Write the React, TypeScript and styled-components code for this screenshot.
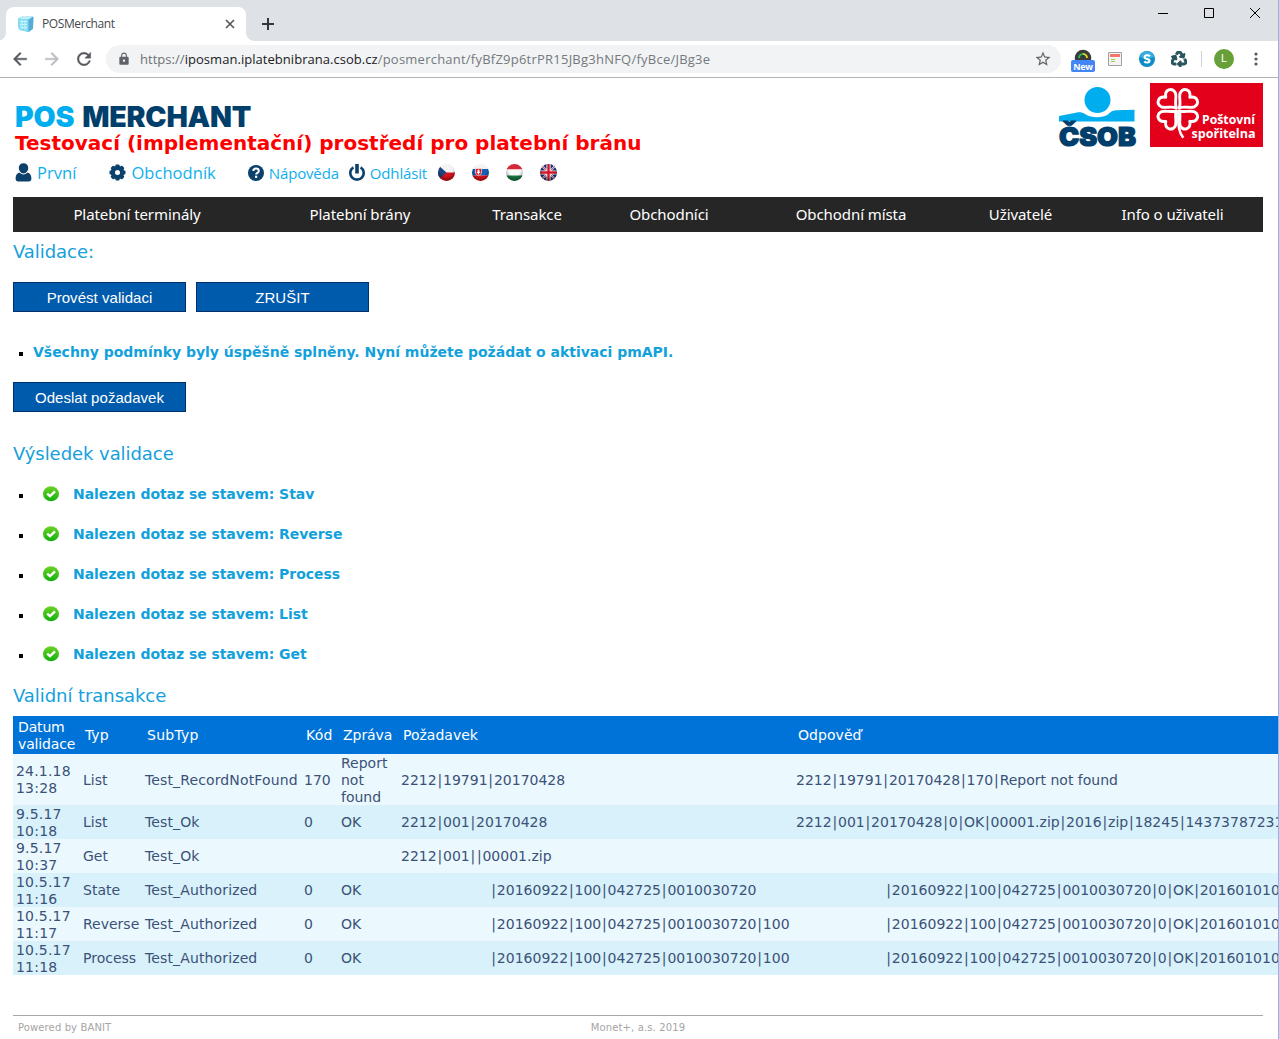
import React from "react";
import styled, { createGlobalStyle } from "styled-components";
import { FaRecycle } from "react-icons/fa";
import { MdLock, MdRefresh, MdArrowBack, MdArrowForward, MdStarBorder } from "react-icons/md";

const VERDANA = 'Verdana, "DejaVu Sans", sans-serif';
const UI = '"Segoe UI", "Open Sans", sans-serif';

const GlobalStyle = createGlobalStyle`
  *, *::before, *::after { box-sizing: border-box; }
  html, body { margin: 0; padding: 0; background: #fff; overflow: hidden; }
`;

const Window = styled.div`
  width: 1279px;
  height: 1039px;
  overflow: hidden;
  display: flex;
  flex-direction: column;
  background: #fff;
  border-right: 1px solid #80b8fc;
  font-family: ${VERDANA};
`;

/* ---------- browser chrome ---------- */

const TabStrip = styled.div`
  display: flex;
  flex: none;
  height: 41px;
  background: #dee1e6;
  padding: 7px 17px 0 6px;
`;

const Tab = styled.div`
  position: relative;
  display: flex;
  align-items: center;
  width: 240px;
  height: 34px;
  padding: 0 10px 0 11px;
  background: #fff;
  border-radius: 8px 8px 0 0;

  &::before,
  &::after {
    content: "";
    position: absolute;
    bottom: 0;
    width: 8px;
    height: 8px;
  }
  &::before {
    left: -8px;
    background: radial-gradient(circle at 0 0, transparent 7.5px, #fff 8px);
  }
  &::after {
    right: -8px;
    background: radial-gradient(circle at 100% 0, transparent 7.5px, #fff 8px);
  }
`;

const TabTitle = styled.span`
  flex: 1;
  margin-left: 7px;
  font: 12px/16px ${UI};
  letter-spacing: -0.4px;
  color: #45494d;
`;

const NewTab = styled.div`
  display: flex;
  align-items: center;
  margin-left: 15px;
  height: 34px;
`;

const WindowButtons = styled.div`
  display: flex;
  gap: 34px;
  margin-left: auto;
  height: 12px;
`;

const Toolbar = styled.div`
  display: flex;
  flex: none;
  align-items: center;
  height: 37px;
  padding: 0 13px 0 10px;
  border-bottom: 1px solid #b1b2b4;
`;

const NavButtons = styled.div`
  display: flex;
  gap: 12px;
  width: 96px;

  path:not([fill="none"]) { stroke: currentColor; stroke-width: 0.5px; }
`;

const Omnibox = styled.div`
  display: flex;
  align-items: center;
  width: 955px;
  height: 28px;
  padding: 0 9px 0 11px;
  border-radius: 14px;
  background: #f1f3f4;
`;

const Url = styled.span`
  flex: 1;
  margin-left: 9px;
  font: 13px/20px ${UI};
  letter-spacing: 0.23px;
  color: #75797e;
`;

const Host = styled.span<{ $dim?: boolean }>`
  color: ${(p) => (p.$dim ? "#6d7175" : "#202124")};
  letter-spacing: 0.04px;
`;

const Extensions = styled.div`
  display: flex;
  align-items: center;
  flex: 1;
  padding-left: 10px;
`;

const Gauge = styled.div`
  position: relative;
  width: 24px;
  height: 24px;
  margin-right: 12px;
`;

const NewBadge = styled.span`
  position: absolute;
  left: 0;
  bottom: -1px;
  width: 24px;
  height: 12px;
  border-radius: 2px;
  background: #4285f4;
  color: #fff;
  font: bold 9px/13px ${UI};
  letter-spacing: -0.2px;
  text-align: center;
`;

const Slot = styled.div`
  display: flex;
  justify-content: center;
  width: 16px;
  margin-right: 16px;
`;

const RecycleIcon = styled(FaRecycle)`
  color: #28555c;
  stroke: currentColor;
  stroke-width: 34px;
`;

const Separator = styled.div`
  width: 1px;
  height: 16px;
  margin: 0 12px 0 -2px;
  background: #cfd1d4;
`;

const Avatar = styled.div`
  width: 20px;
  height: 20px;
  margin-right: 20px;
  border-radius: 50%;
  background: #689f38;
  color: #fff;
  font: 11px/20px Roboto, sans-serif;
  text-align: center;
`;

/* ---------- page header ---------- */

const Page = styled.div`
  display: flex;
  flex-direction: column;
  flex: 1;
  padding: 0 15px 0 13px;
`;

const Header = styled.header`
  display: flex;
  justify-content: space-between;
  height: 119px;
`;

const Brand = styled.div`
  padding: 23px 0 0 2px;
`;

const Logotype = styled.h1`
  display: flex;
  gap: 8px;
  margin: 0;
  height: 30px;
  font: 900 28.5px/31px Inter, sans-serif;
  letter-spacing: -0.2px;
  color: #003e6b;
`;

const LogoAccent = styled.span`
  color: #00aeef;
`;

const Environment = styled.p`
  margin: 0;
  height: 24px;
  font: bold 20px/24px ${VERDANA};
  color: #f00;
`;

const UserBar = styled.div`
  display: flex;
  align-items: center;
  height: 36px;
`;

const UserLink = styled.a<{ $large?: boolean; $after: number }>`
  display: flex;
  align-items: center;
  gap: 5px;
  margin-right: ${(p) => p.$after}px;
  font: ${(p) => (p.$large ? 16.5 : 15)}px/20px ${UI};
  letter-spacing: ${(p) => (p.$large ? 0.05 : -0.16)}px;
  color: #10afec;

  svg { margin-top: -1px; }
`;

const Flags = styled.div`
  display: flex;
  gap: 17px;
  margin-top: -2px;
`;

const Logos = styled.div`
  display: flex;
  gap: 14px;
  padding-top: 5px;
`;

const BankLogo = styled.div`
  width: 77px;
  height: 64px;

  svg { overflow: visible; }
`;

const SavingsLogo = styled.div`
  display: flex;
  width: 113px;
  height: 64px;
  background: #e2001a;
`;

/* ---------- navigation ---------- */

const MainNav = styled.nav`
  display: grid;
  grid-template-columns: 248px 198px 136px 148px 216px 123px 181px;
  flex: none;
  height: 35px;
  background: #262626;
`;

const NavItem = styled.a`
  font: 15px/35px "Noto Sans", sans-serif;
  letter-spacing: -0.08px;
  text-align: center;
  color: #fff;
`;

/* ---------- content ---------- */

const Heading = styled.h2<{ $h: number; $gap?: number }>`
  margin: ${(p) => p.$gap ?? 0}px 0 0;
  height: ${(p) => p.$h}px;
  font: 18px/${(p) => p.$h}px ${VERDANA};
  letter-spacing: -0.06px;
  color: #159fdb;
`;

const Actions = styled.div`
  display: flex;
  gap: 10px;
  padding-top: 10px;
`;

const Button = styled.button`
  width: 173px;
  height: 30px;
  padding: 2px 0 0;
  border: 1px solid #00306b;
  background: #005bac;
  color: #fff;
  font: 15px/26px Arial, "Liberation Sans", sans-serif;
  letter-spacing: 0.04px;
`;

const List = styled.ul`
  margin: 0;
  padding: 0;
  list-style: none;
`;

const Item = styled.li`
  display: flex;
  align-items: center;
  height: 40px;
  padding-left: 6px;
  font: bold 14px/17px ${VERDANA};
  letter-spacing: -0.06px;
  color: #13a1dc;

  &::before {
    content: "";
    width: 4px;
    height: 4px;
    margin: 3px 10px 0 0;
    background: #000;
  }
`;

const Notice = styled(List)`
  padding: 20px 0 0;

  ${Item} { letter-spacing: -0.02px; }
`;

const Check = styled.svg`
  width: 16px;
  height: 16px;
  margin: 0 14px 0 10px;
`;

/* ---------- transactions table ---------- */

const Table = styled.div`
  flex: none;
  width: 1265px;
  overflow: hidden;
`;

const Row = styled.div<{ $bg: string; $h: number; $head?: boolean }>`
  display: grid;
  grid-template-columns: 67px 62px 159px 37px 60px 395px 485px;
  grid-template-rows: 100%;
  align-items: center;
  height: ${(p) => p.$h}px;
  padding-top: 1px;
  background: ${(p) => p.$bg};
  color: ${(p) => (p.$head ? "#fff" : "#3b5178")};
  font: 14px/17px ${VERDANA};

  > div { padding-left: ${(p) => (p.$head ? 5 : 3)}px; }
`;

const Cell = styled.div<{ $ls?: number; $indent?: boolean; $wrap?: boolean }>`
  white-space: ${(p) => (p.$wrap ? "normal" : "nowrap")};
  letter-spacing: ${(p) => p.$ls ?? 0}px;
  text-indent: ${(p) => (p.$indent ? 89.5 : 0)}px;
`;

const Bar = styled.span`
  display: inline-block;
  width: 6.36px;
  text-indent: 0;
  text-align: center;
`;

const Footer = styled.footer`
  display: grid;
  grid-template-columns: 1fr auto 1fr;
  height: 24px;
  margin-top: 40px;
  padding: 0 5px;
  border-top: 1px solid #a8a8a8;
  font: 10px/24px ${VERDANA};
  letter-spacing: 0.12px;
  color: #a5a5a5;
`;

const nav = [
  "Platební terminály", "Platební brány", "Transakce", "Obchodníci",
  "Obchodní místa", "Uživatelé", "Info o uživateli",
];

const states = ["Stav", "Reverse", "Process", "List", "Get"];

type Tx = { date: string; type: string; sub: string; code: string; msg: string; req: string; res: string };

const rows: Tx[] = [
  { date: "24.1.18 13:28", type: "List", sub: "Test_RecordNotFound", code: "170", msg: "Report not found", req: "2212|19791|20170428", res: "2212|19791|20170428|170|Report not found" },
  { date: "9.5.17 10:18", type: "List", sub: "Test_Ok", code: "0", msg: "OK", req: "2212|001|20170428", res: "2212|001|20170428|0|OK|00001.zip|2016|zip|18245|14373787231" },
  { date: "9.5.17 10:37", type: "Get", sub: "Test_Ok", code: "", msg: "", req: "2212|001||00001.zip", res: "" },
  { date: "10.5.17 11:16", type: "State", sub: "Test_Authorized", code: "0", msg: "OK", req: "|20160922|100|042725|0010030720", res: "|20160922|100|042725|0010030720|0|OK|201601010" },
  { date: "10.5.17 11:17", type: "Reverse", sub: "Test_Authorized", code: "0", msg: "OK", req: "|20160922|100|042725|0010030720|100", res: "|20160922|100|042725|0010030720|0|OK|201601010" },
  { date: "10.5.17 11:18", type: "Process", sub: "Test_Authorized", code: "0", msg: "OK", req: "|20160922|100|042725|0010030720|100", res: "|20160922|100|042725|0010030720|0|OK|201601010" },
];

/* Pipe-separated message whose separators keep a fixed advance. */
function Message({ text }: { text: string }) {
  return (
    <Cell $indent={text.startsWith("|")}>
      {text.split("|").map((part, i) => (
        <React.Fragment key={i}>
          {i > 0 && <Bar>|</Bar>}
          {part}
        </React.Fragment>
      ))}
    </Cell>
  );
}

const Cube = () => (
  <svg width="18" height="18" viewBox="0 0 18 18">
    <path d="M1 3.500 6 1l10 .6.8 1.200-.8 11L11.500 17 3 15 1.400 13z" fill="#6fcbea" />
    <path d="M1 3.500 6 1l10 .6-4.500 3z" fill="#c3eef8" />
    <path d="M1 3.500l10.500 1V17L3 15l-1.600-2z" fill="#86dcf2" />
    <path d="M11.500 4.600 16 2v11.800L11.500 17z" fill="#57abd4" />
    <path d="M3 6.500h7M3 9.500h7M3.500 12.500h6.500M5 5v9M8 5v10" stroke="#c4f4fc" strokeWidth="1" fill="none" />
  </svg>
);

const NAVY = "#0b416b";

const Person = () => (
  <svg width="17" height="19" viewBox="0 0 17 19" fill={NAVY}>
    <path d="M8.500 0.300c2.900 0 4.700 1.800 4.700 4.500s-1.700 5.700-4.700 5.700-4.700-3-4.700-5.700S5.600.300 8.500.300z" />
    <path d="M4.400 9.600C2 10.500.600 12.200.600 15.500c0 1.800 1 3 2.600 3h10.600c1.600 0 2.600-1.200 2.600-3 0-3.300-1.400-5-3.800-5.900-1.100 1.200-2.400 1.800-4.100 1.800s-3-.6-4.100-1.800z" />
  </svg>
);

const Gear = () => (
  <svg width="17" height="17" viewBox="-8.500 -8.500 17 17" fill={NAVY}>
    {[0, 45, 90, 135].map((a) => (
      <rect key={a} x="-2.100" y="-8" width="4.200" height="16" rx="1" transform={`rotate(${a})`} />
    ))}
    <circle r="4.800" fill="none" stroke={NAVY} strokeWidth="4" />
    <circle r="2.500" fill="#fff" />
  </svg>
);

const Help = () => (
  <svg width="16" height="16" viewBox="0 0 16 16">
    <circle cx="8" cy="8" r="8" fill={NAVY} />
    <path d="M5.300 6.100C5.300 4.400 6.400 3.500 8 3.500s2.800.9 2.800 2.400c0 1.900-2.700 1.900-2.700 3.700" fill="none" stroke="#fff" strokeWidth="2" />
    <rect x="7" y="10.700" width="2.200" height="2.200" fill="#fff" />
  </svg>
);

const Power = () => (
  <svg width="16" height="18" viewBox="0 0 16 18" fill="none" stroke={NAVY}>
    <path d="M4.400 3.300a6.700 6.700 0 1 0 7.200 0" strokeWidth="2.600" />
    <path d="M8 0v9.500" strokeWidth="3.600" />
  </svg>
);

type Country = "cz" | "sk" | "hu" | "gb";

function Flag({ code }: { code: Country }) {
  return (
    <svg width="17" height="17" viewBox="0 0 17 17">
      <defs>
        <clipPath id={`clip-${code}`}><circle cx="8.500" cy="8.500" r="8.500" /></clipPath>
        <radialGradient id={`shade-${code}`} cx=".5" cy=".35" r=".7">
          <stop offset=".5" stopColor="#000" stopOpacity="0" />
          <stop offset="1" stopColor="#000" stopOpacity=".5" />
        </radialGradient>
      </defs>
      <g clipPath={`url(#clip-${code})`}>
        {code === "cz" && (
          <>
            <path d="M0 0h17v8.500H0z" fill="#f4f4f4" />
            <path d="M0 8.500h17V17H0z" fill="#d8121c" />
            <path d="M0 1l8.500 7.500L0 16z" fill="#1c4680" />
          </>
        )}
        {code === "sk" && (
          <>
            <path d="M0 0h17v5.500H0z" fill="#f4f4f4" />
            <path d="M0 5h17v6.500H0z" fill="#1660b4" />
            <path d="M0 11.500h17V17H0z" fill="#e0141c" />
            <path d="M3.500 4.500h6v4.500c0 1.300-1.200 2-3 2.700-1.800-.7-3-1.400-3-2.700z" fill="#e0141c" stroke="#fff" strokeWidth=".6" />
            <path d="M6.500 5.500v5M5 7h3M4.700 8.600h3.600" stroke="#fff" strokeWidth="1" />
          </>
        )}
        {code === "hu" && (
          <>
            <path d="M0 0h17v5.500H0z" fill="#d42a38" />
            <path d="M0 5.500h17v6H0z" fill="#f8f8f8" />
            <path d="M0 11.500h17V17H0z" fill="#1b7a45" />
          </>
        )}
        {code === "gb" && (
          <>
            <path d="M0 0h17v17H0z" fill="#17306f" />
            <path d="M1 1l15 15M16 1L1 16" stroke="#d0d4e4" strokeWidth="2" />
            <path d="M1 1l15 15M16 1L1 16" stroke="#c8304a" strokeWidth=".8" />
            <path d="M8.500 0v17M0 8.500h17" stroke="#f4f4f4" strokeWidth="4.200" />
            <path d="M8.500 0v17M0 8.500h17" stroke="#d4152a" strokeWidth="2.400" />
          </>
        )}
        <circle cx="8.500" cy="8.500" r="8.500" fill={`url(#shade-${code})`} />
      </g>
    </svg>
  );
}

const CsobLogo = () => (
  <BankLogo>
    <svg width="77" height="64" viewBox="0 0 77 64">
      <path d="M0 33 18 29.500c3-.5 5.500 0 8 1.500 6 4 17 4.500 23 .5C52 29 53 27.500 57 27.300L75.500 26.800v11.700H0z" fill="#00aeef" />
      <circle cx="38.500" cy="17" r="13" fill="#00aeef" />
      <text x="0" y="63.200" textLength="77" lengthAdjust="spacingAndGlyphs" fontFamily="Inter, sans-serif" fontWeight="900" fontSize="26" stroke="#003e6b" strokeWidth="1.200" fill="#003e6b">ČSOB</text>
    </svg>
  </BankLogo>
);

const PostLogo = () => (
  <SavingsLogo>
    <svg width="113" height="64" viewBox="0 0 113 64">
      <g transform="translate(27.800 26.300)" fill="none" stroke="#fff" strokeWidth="2.900" strokeLinejoin="round">
        {[45, 135, 225, 315].map((a) => (
          <path key={a} transform={`rotate(${a})`} d="M0-2C-2-7-8.500-9.500-10-13.500-11.500-20-4.500-23.500 0-17 4.500-23.500 11.500-20 10-13.500 8.500-9.500 2-7 0-2z" />
        ))}
        <path d="M.500 2C.800 13-.500 21 5.500 28.500" strokeWidth="2.600" />
      </g>
      <g fontFamily="Open Sans, sans-serif" fontWeight="700" fontSize="13" fill="#fff">
        <text x="52" y="41" textLength="53" lengthAdjust="spacingAndGlyphs">Poštovní</text>
        <text x="41.500" y="55" textLength="64" lengthAdjust="spacingAndGlyphs">spořitelna</text>
      </g>
    </svg>
  </SavingsLogo>
);

const OkMark = () => (
  <Check viewBox="0 0 16 16">
    <defs>
      <linearGradient id="ok" x1="0" y1="0" x2="0" y2="1">
        <stop offset="0" stopColor="#6fd327" />
        <stop offset="1" stopColor="#12b00e" />
      </linearGradient>
    </defs>
    <ellipse cx="8" cy="7.700" rx="8" ry="7.500" fill="url(#ok)" />
    <path d="M4.200 7.600 7 10.200l5-4.800" fill="none" stroke="#fff" strokeWidth="2.400" />
  </Check>
);

export default function App() {
  return (
    <Window>
      <GlobalStyle />
      <TabStrip>
        <Tab>
          <Cube />
          <TabTitle>POSMerchant</TabTitle>
          <svg width="12" height="12" viewBox="0 0 12 12" stroke="#55595e" strokeWidth="1.700">
            <path d="M2 2l8 8M10 2l-8 8" />
          </svg>
        </Tab>
        <NewTab>
          <svg width="14" height="14" viewBox="0 0 14 14" stroke="#33373a" strokeWidth="2">
            <path d="M7 1v12M1 7h12" />
          </svg>
        </NewTab>
        <WindowButtons>
          <svg width="12" height="12" viewBox="0 0 12 12"><path d="M1 6.500h10" stroke="#000" /></svg>
          <svg width="12" height="12" viewBox="0 0 12 12"><path d="M1.500 1.500h9v9h-9z" fill="none" stroke="#000" /></svg>
          <svg width="12" height="12" viewBox="0 0 12 12"><path d="M1 1l10 10M11 1L1 11" stroke="#000" /></svg>
        </WindowButtons>
      </TabStrip>

      <Toolbar>
        <NavButtons>
          <MdArrowBack size={20} color="#55595e" />
          <MdArrowForward size={20} color="#bbbdc0" />
          <MdRefresh size={20} color="#55595e" />
        </NavButtons>
        <Omnibox>
          <MdLock size={14} color="#5f6368" />
          <Url>
            <Host $dim>https://</Host>
            <Host>iposman.iplatebnibrana.csob.cz</Host>
            /posmerchant/fyBfZ9p6trPR15JBg3hNFQ/fyBce/JBg3e
          </Url>
          <MdStarBorder size={18} color="#5f6368" />
        </Omnibox>
        <Extensions>
          <Gauge>
            <svg width="24" height="18" viewBox="0 0 24 18">
              <circle cx="12" cy="11" r="8.300" fill="#3b3b3b" />
              <path d="M8 11a4.200 4.200 0 0 1 4-4.200" stroke="#19c35b" strokeWidth="1.800" fill="none" />
              <path d="M12 6.800a4.200 4.200 0 0 1 4 4.200" stroke="#e4e21a" strokeWidth="1.800" fill="none" />
            </svg>
            <NewBadge>New</NewBadge>
          </Gauge>
          <Slot>
            <svg width="14" height="14" viewBox="0 0 14 14">
              <path d="M.500.500h13v13H.500z" fill="#f4f4f4" stroke="#a0a0a0" />
              <path d="M2 2h10v3H2z" fill="#f5766c" />
              <path d="M3 7.500h4M3 9.500h4" stroke="#9bd43c" strokeWidth="1.200" />
            </svg>
          </Slot>
          <Slot>
            <svg width="16" height="16" viewBox="0 0 16 16">
              <circle cx="8" cy="8" r="8" fill="#0c8bc9" />
              <path d="M1 6a7.200 7.200 0 0 1 14 0c-4 2-10 2-14 0z" fill="#36aee0" />
              <path d="M11 5.200C9.500 3.800 5.600 4 5.600 6.200c0 2.300 5 1.300 5 3.600 0 2.100-3.900 2.100-5.400.7" stroke="#fff" strokeWidth="2" fill="none" />
            </svg>
          </Slot>
          <Slot><RecycleIcon size={16} /></Slot>
          <Separator />
          <Avatar>L</Avatar>
          <svg width="4" height="16" viewBox="0 0 4 16" fill="#55595e">
            <circle cx="2" cy="3" r="1.600" /><circle cx="2" cy="8" r="1.600" /><circle cx="2" cy="13" r="1.600" />
          </svg>
        </Extensions>
      </Toolbar>

      <Page>
        <Header>
          <Brand>
            <Logotype><LogoAccent>POS</LogoAccent>MERCHANT</Logotype>
            <Environment>Testovací (implementační) prostředí pro platební bránu</Environment>
            <UserBar>
              <UserLink $large $after={33}><Person />První</UserLink>
              <UserLink $large $after={32}><Gear />Obchodník</UserLink>
              <UserLink $after={10}><Help />Nápověda</UserLink>
              <UserLink $after={11}><Power />Odhlásit</UserLink>
              <Flags>
                <Flag code="cz" />
                <Flag code="sk" />
                <Flag code="hu" />
                <Flag code="gb" />
              </Flags>
            </UserBar>
          </Brand>
          <Logos>
            <CsobLogo />
            <PostLogo />
          </Logos>
        </Header>

        <MainNav>
          {nav.map((n) => <NavItem key={n}>{n}</NavItem>)}
        </MainNav>

        <Heading $h={40}>Validace:</Heading>
        <Actions>
          <Button>Provést validaci</Button>
          <Button>ZRUŠIT</Button>
        </Actions>
        <Notice>
          <Item>Všechny podmínky byly úspěšně splněny. Nyní můžete požádat o aktivaci pmAPI.</Item>
        </Notice>
        <Actions>
          <Button>Odeslat požadavek</Button>
        </Actions>

        <Heading $h={40} $gap={22}>Výsledek validace</Heading>
        <List>
          {states.map((s) => (
            <Item key={s}><OkMark />Nalezen dotaz se stavem: {s}</Item>
          ))}
        </List>

        <Heading $h={40} $gap={2}>Validní transakce</Heading>
        <Table>
          <Row $head $bg="#0073d8" $h={38}>
            <Cell $wrap $ls={-0.15}>Datum validace</Cell>
            <Cell>Typ</Cell>
            <Cell $ls={0.25}>SubTyp</Cell>
            <Cell $ls={0.2}>Kód</Cell>
            <Cell $ls={-0.05}>Zpráva</Cell>
            <Cell>Požadavek</Cell>
            <Cell $ls={0.05}>Odpověď</Cell>
          </Row>
          {rows.map((r, i) => (
            <Row key={r.date} $h={i === 0 ? 51 : 34} $bg={i % 2 ? "#d8f1fa" : "#ebf9fe"}>
              <Cell $wrap $ls={0.2}>{r.date}</Cell>
              <Cell>{r.type}</Cell>
              <Cell $ls={0.13}>{r.sub}</Cell>
              <Cell>{r.code}</Cell>
              <Cell $wrap>{r.msg}</Cell>
              <Message text={r.req} />
              <Message text={r.res} />
            </Row>
          ))}
        </Table>

        <Footer>
          <span>Powered by BANIT</span>
          <span>Monet+, a.s. 2019</span>
        </Footer>
      </Page>
    </Window>
  );
}
